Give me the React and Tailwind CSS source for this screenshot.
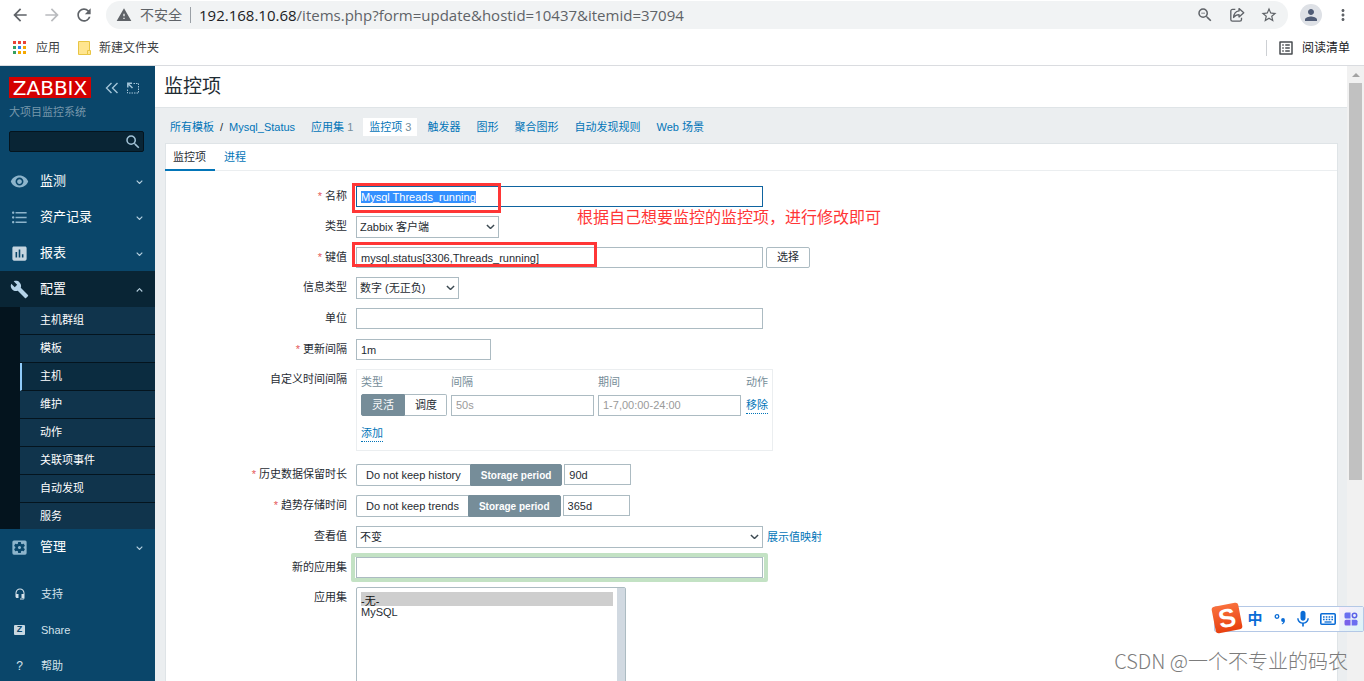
import React, { useEffect, useRef } from "react";
import {
  MdArrowBack,
  MdArrowForward,
  MdRefresh,
  MdWarning,
  MdZoomOut,
  MdStarBorder,
  MdPerson,
  MdMoreVert,
  MdListAlt,
  MdVisibility,
  MdFormatListBulleted,
  MdAssessment,
  MdBuild,
  MdSettingsApplications,
  MdHeadsetMic,
  MdSearch,
  MdMic,
} from "react-icons/md";

const mainMenu = [
  { name: "监测", icon: MdVisibility, color: "text-[#8db4cb]" },
  { name: "资产记录", icon: MdFormatListBulleted, color: "text-[#8db4cb]" },
  { name: "报表", icon: MdAssessment, color: "text-[#c5d5e0]" },
];

const configMenu = [
  "主机群组",
  "模板",
  "主机",
  "维护",
  "动作",
  "关联项事件",
  "自动发现",
  "服务",
];

const hostLinks = [
  { name: "应用集", count: 1 },
  { name: "监控项", count: 3, active: true },
  { name: "触发器" },
  { name: "图形" },
  { name: "聚合图形" },
  { name: "自动发现规则" },
  { name: "Web 场景" },
];

const appColors = [
  "bg-[#ea4335]",
  "bg-[#ea4335]",
  "bg-[#ea4335]",
  "bg-[#34a060]",
  "bg-[#2a80f0]",
  "bg-[#f5a800]",
  "bg-[#34a060]",
  "bg-[#f5a800]",
  "bg-[#f5a800]",
];

const inputClass =
  "block h-[21px] border border-[#acbbc2] bg-white px-1 text-[#1f2c33] outline-none placeholder:text-[#9a9a9a]";

const Chevron = ({ className, up }) => (
  <svg viewBox="0 0 10 6" className={className} fill="none" stroke="currentColor">
    <path d={up ? "M1 5l4-4 4 4" : "M1 1l4 4 4-4"} strokeWidth="1.6" />
  </svg>
);

// 瀏覽器工具列
const Browser = () => (
  <div className="shrink-0 border-b border-[#dadce0] bg-white text-[#5f6368]">
    <div className="flex h-[30px] items-center pr-3">
      <div className="flex items-center gap-3 px-2.5">
        <button aria-label="后退">
          <MdArrowBack className="size-5" />
        </button>
        <button aria-label="前进" className="text-[#b9bbbe]">
          <MdArrowForward className="size-5" />
        </button>
        <button aria-label="刷新">
          <MdRefresh className="size-5" />
        </button>
      </div>
      <div className="ml-0.5 flex h-7 flex-1 items-center rounded-full bg-[#f1f3f4] pr-2.5 pl-2.5">
        <MdWarning className="size-4" />
        <span className="ml-2 text-sm">不安全</span>
        <span className="mx-2 h-4 w-px bg-[#9aa0a6]" />
        <span className="flex-1 font-['Open_Sans','Noto_Sans_CJK_SC',sans-serif] text-[15px]">
          <span className="text-[#202124]">192.168.10.68</span>
          /items.php?form=update&amp;hostid=10437&amp;itemid=37094
        </span>
        <div className="flex items-center gap-3.5">
          <button aria-label="缩放">
            <MdZoomOut className="size-[18px]" />
          </button>
          <button aria-label="分享">
            <svg
              viewBox="0 0 16 16"
              className="size-[18px]"
              fill="none"
              stroke="currentColor"
              strokeWidth="1.2"
              strokeLinejoin="round"
            >
              <path d="M6.500 3H4A1.500 1.500 0 0 0 2.500 4.500V12A1.500 1.500 0 0 0 4 13.500H10.500A1.500 1.500 0 0 0 12 12V10.500" />
              <path d="M9.800 2.300l4.200 3.700-4.200 3.700V7.700C7.500 7.700 6.200 8.500 5 10.200 5.200 6.900 6.900 4.800 9.800 4.400z" />
            </svg>
          </button>
          <button aria-label="收藏">
            <MdStarBorder className="size-[18px]" />
          </button>
        </div>
      </div>
      <button
        aria-label="用户"
        className="ml-3 flex size-[22px] items-center justify-center rounded-full bg-[#dee1e6] text-[#4f5b75]"
      >
        <MdPerson className="size-[18px]" />
      </button>
      <button aria-label="菜单" className="ml-3">
        <MdMoreVert className="size-[18px]" />
      </button>
    </div>
    <div className="flex h-[35px] items-center pr-3.5 pl-[13px] text-xs text-[#3c4043]">
      <a href="#apps" className="flex items-center">
        <span className="mr-2.5 grid grid-cols-3 gap-0.5">
          {appColors.map((color, index) => (
            <span key={index} className={`size-[3px] ${color}`} />
          ))}
        </span>
        应用
      </a>
      <a href="#folder" className="ml-[18px] flex items-center">
        <svg viewBox="0 0 13 14" className="mr-2 h-3.5 w-[13px]">
          <path d="M.5.500h11v13H.500z" fill="#ffe58f" stroke="#e8c544" />
          <path d="M9.500 9.500h3v4h-3z" fill="#ffe58f" stroke="#e8c544" />
        </svg>
        新建文件夹
      </a>
      <span className="ml-auto h-4 w-px bg-[#cdd0d4]" />
      <button className="ml-2.5 flex items-center text-[#202124]">
        <MdListAlt className="mr-[7px] size-[18px] text-[#4a4d51]" />
        阅读清单
      </button>
    </div>
  </div>
);

const MenuItem = ({ name, icon: Icon, color, open }) => (
  <a
    href={`#${name}`}
    className={`flex h-9 items-center pr-3 pl-2.5 text-[13px] text-white ${
      open ? "bg-[#092535]" : ""
    }`}
  >
    <Icon className={`size-[19px] ${color}`} />
    <span className="ml-[11px] flex-1">{name}</span>
    <Chevron up={open} className="mt-0.5 w-[7px] text-[#b7d0df]" />
  </a>
);

const Sidebar = () => (
  <aside className="w-[155px] shrink-0 bg-[#0a466a]">
    <div className="flex items-center pt-[11px] pl-[9px]">
      <a
        href="#home"
        className="flex h-[21px] w-[82px] items-center justify-center bg-[#d40000] font-['DejaVu_Sans',sans-serif] text-xl text-white"
      >
        ZABBIX
      </a>
      <button aria-label="收起" className="ml-3.5 text-[#a3c4d8]">
        <svg viewBox="0 0 14 12" className="h-3 w-3.5" fill="none" stroke="currentColor" strokeWidth="1.400">
          <path d="M6.500 1l-5 5 5 5M12.500 1l-5 5 5 5" />
        </svg>
      </button>
      <button aria-label="隐藏" className="ml-2 text-[#a3c4d8]">
        <svg viewBox="0 0 12 12" className="size-3" fill="none" stroke="currentColor">
          <path d="M6.500 1.500h5v9.500H.500V7" strokeDasharray="1.500 1" />
          <path d="M.800 5.500V1.300H5M1.200 1.700L5.500 6" strokeWidth="1.500" />
        </svg>
      </button>
    </div>
    <p className="mt-1.5 pl-[9px] text-[11px] leading-4 text-[#7797ab]">
      大项目监控系统
    </p>
    <form className="relative mt-[11px] mr-[11px] ml-[9px]">
      <input
        aria-label="搜索"
        className="block h-[21px] w-full rounded-xs border border-[#04141e] bg-[#092535] px-1 text-[11px] text-white outline-none"
      />
      <MdSearch className="absolute top-0.5 right-0.5 size-[18px] text-[#a3c4d8]" />
    </form>
    <nav className="mt-[11px]">
      {mainMenu.map((item) => (
        <MenuItem key={item.name} {...item} />
      ))}
      <MenuItem name="配置" icon={MdBuild} color="text-[#b4d3e8]" open />
      <ul className="h-[222px] overflow-hidden bg-[#04141e] pl-5">
        {configMenu.map((name) => (
          <li
            key={name}
            className={`h-7 border-b border-[#04141e] text-[11px] leading-[27px] text-white ${
              name === "主机"
                ? "border-l-2 border-l-[#90cbf9] bg-[#0b2c40] pl-[18px]"
                : "bg-[#10344c] pl-5"
            }`}
          >
            <a href={`#${name}`}>{name}</a>
          </li>
        ))}
      </ul>
      <MenuItem name="管理" icon={MdSettingsApplications} color="text-[#8db4cb]" />
    </nav>
    <ul className="mt-[11px] text-[11px] text-[#d5e2ea]">
      <li className="flex h-9 items-center pl-3.5">
        <MdHeadsetMic className="mr-[15px] size-3" />
        <a href="#support">支持</a>
      </li>
      <li className="flex h-9 items-center pl-3.5">
        <span className="mr-4 flex h-2.5 w-[11px] items-center justify-center rounded-[1px] bg-[#c8d8e2] text-[9px] font-bold text-[#0a466a]">
          Z
        </span>
        <a href="#share">Share</a>
      </li>
      <li className="flex h-9 items-center pl-3.5">
        <span className="mr-4 w-[11px] text-center text-xs">?</span>
        <a href="#help">帮助</a>
      </li>
    </ul>
  </aside>
);

const Row = ({ label, htmlFor, required, className = "", children }) => (
  <div className={`mb-[9px] flex gap-[9px] ${className}`}>
    <label htmlFor={htmlFor} className="w-[181px] shrink-0 text-right leading-[21px]">
      {required && <span className="text-[#e45959]">* </span>}
      {label}
    </label>
    <div className="relative flex items-start">{children}</div>
  </div>
);

const Select = ({ id, width, value }) => (
  <div className={`relative ${width}`}>
    <select
      id={id}
      className="block h-[22px] w-full appearance-none border border-[#acbbc2] bg-white px-[3px] outline-none"
    >
      <option>{value}</option>
    </select>
    <Chevron className="pointer-events-none absolute top-2 right-1 w-[9px] text-[#3c4a52]" />
  </div>
);

// 分段按鈕，active 是選中的那個
const Segmented = ({ options, active }) => (
  <div className="flex h-[22px]">
    {options.map((option) => (
      <button
        key={option}
        type="button"
        className={`border first:rounded-l-xs last:rounded-r-xs ${
          option === active
            ? "border-[#768d99] bg-[#768d99] px-2.5 text-[10px] font-bold text-white"
            : "border-[#acbbc2] bg-white px-[9px] first:border-r-0 last:border-l-0"
        }`}
      >
        {option}
      </button>
    ))}
  </div>
);

const ItemForm = () => {
  const nameRef = useRef(null);

  useEffect(() => {
    nameRef.current.focus({ preventScroll: true });
    nameRef.current.select();
  }, []);

  return (
    <form className="pt-[15px]">
      <Row label="名称" htmlFor="name" required>
        <input
          id="name"
          ref={nameRef}
          defaultValue="Mysql Threads_running"
          className="block h-[21px] w-[407px] border border-[#0f64a0] px-1 outline-none selection:bg-[#3390ff] selection:text-white"
        />
        <div className="pointer-events-none absolute -top-[3px] -left-1 h-[30px] w-[149px] border-3 border-[#ff3636]" />
        <p className="absolute top-5 left-[221px] text-base whitespace-nowrap text-[#ff3636]">
          根据自己想要监控的监控项，进行修改即可
        </p>
      </Row>
      <Row label="类型" htmlFor="type">
        <Select id="type" width="w-[143px]" value="Zabbix 客户端" />
      </Row>
      <Row label="键值" htmlFor="key" required>
        <input
          id="key"
          defaultValue="mysql.status[3306,Threads_running]"
          className={`${inputClass} w-[407px]`}
        />
        <button
          type="button"
          className="ml-[3px] h-[21px] rounded-xs border border-[#acbbc2] px-2.5"
        >
          选择
        </button>
        <div className="pointer-events-none absolute -top-[5px] -left-1 h-[25px] w-[245px] border-3 border-[#ff3636]" />
      </Row>
      <Row label="信息类型" htmlFor="value-type">
        <Select id="value-type" width="w-[103px]" value="数字 (无正负)" />
      </Row>
      <Row label="单位" htmlFor="units">
        <input id="units" className={`${inputClass} w-[407px]`} />
      </Row>
      <Row label="更新间隔" htmlFor="delay" required className="pt-px">
        <input id="delay" defaultValue="1m" className={`${inputClass} w-[135px]`} />
      </Row>
      <Row label="自定义时间间隔" className="pb-1">
        <div className="h-[82px] border border-[#ebeef0] px-1">
          <table className="text-left">
            <thead>
              <tr className="h-6 text-[#768d99]">
                <th className="pr-1 font-normal">类型</th>
                <th className="pr-1 font-normal">间隔</th>
                <th className="pr-[5px] font-normal">期间</th>
                <th className="font-normal">动作</th>
              </tr>
            </thead>
            <tbody>
              <tr>
                <td className="pr-1">
                  <div className="flex h-[22px]">
                    <button
                      type="button"
                      className="rounded-l-xs border border-[#768d99] bg-[#768d99] px-2.5 text-white"
                    >
                      灵活
                    </button>
                    <button
                      type="button"
                      className="rounded-r-xs border border-l-0 border-[#acbbc2] pr-[9px] pl-2.5"
                    >
                      调度
                    </button>
                  </div>
                </td>
                <td className="pr-1">
                  <input
                    aria-label="间隔"
                    placeholder="50s"
                    className={`${inputClass} w-[143px]`}
                  />
                </td>
                <td className="pr-[5px]">
                  <input
                    aria-label="期间"
                    placeholder="1-7,00:00-24:00"
                    className={`${inputClass} w-[143px]`}
                  />
                </td>
                <td>
                  <button
                    type="button"
                    className="border-b border-dotted border-[#0275b8] leading-[15px] text-[#0275b8]"
                  >
                    移除
                  </button>
                </td>
              </tr>
            </tbody>
          </table>
          <button
            type="button"
            className="mt-2.5 border-b border-dotted border-[#0275b8] leading-[15px] text-[#0275b8]"
          >
            添加
          </button>
        </div>
      </Row>
      <Row label="历史数据保留时长" htmlFor="history" required>
        <Segmented options={["Do not keep history", "Storage period"]} active="Storage period" />
        <input id="history" defaultValue="90d" className={`${inputClass} ml-0.5 w-[67px]`} />
      </Row>
      <Row label="趋势存储时间" htmlFor="trends" required>
        <Segmented options={["Do not keep trends", "Storage period"]} active="Storage period" />
        <input id="trends" defaultValue="365d" className={`${inputClass} ml-0.5 w-[67px]`} />
      </Row>
      <Row label="查看值" htmlFor="valuemap">
        <Select id="valuemap" width="w-[407px]" value="不变" />
        <a href="#valuemap" className="ml-1 leading-[22px] text-[#0275b8]">
          展示值映射
        </a>
      </Row>
      <Row label="新的应用集" htmlFor="new-app">
        <div className="-mx-[5px] -my-1 rounded-xs border-4 border-[#c3e2c4] px-px">
          <input id="new-app" className={`${inputClass} w-[407px]`} />
        </div>
      </Row>
      <Row label="应用集" htmlFor="apps">
        <div className="flex h-[140px] w-[270px] rounded-xs border border-[#acbbc2]">
          <select
            id="apps"
            multiple
            defaultValue={["0"]}
            className="flex-1 overflow-hidden p-1 outline-none"
          >
            <option value="0" className="h-3.5 p-0 leading-3">
              -无-
            </option>
            <option value="1" className="h-3.5 p-0 leading-3">
              MySQL
            </option>
          </select>
          <div className="w-2 bg-[#d1d9e1]" />
        </div>
      </Row>
    </form>
  );
};

const Main = () => (
  <main className="min-w-0 flex-1 overflow-hidden bg-[#ebeef0]">
    <header className="flex h-[42px] items-center border-b border-[#dfe4e7] bg-white pl-[9px]">
      <h1 className="pt-0.5 text-[19px]">监控项</h1>
    </header>
    <nav className="flex h-[35px] items-center gap-1 pt-[3px] pl-[9px] text-[#0275b8]">
      <div className="flex gap-1.5 px-1.5 leading-[18px]">
        <a href="#templates">所有模板</a>
        <span className="text-[#1f2c33]">/</span>
        <a href="#status">Mysql_Status</a>
      </div>
      {hostLinks.map((link) => (
        <a
          key={link.name}
          href={`#${link.name}`}
          className={`px-1.5 leading-[18px] ${link.active ? "bg-white" : ""}`}
        >
          {link.name}
          {link.count && <span className="text-[#768d99]"> {link.count}</span>}
        </a>
      ))}
    </nav>
    <section className="mr-[9px] ml-2.5 border border-[#dfe4e7] bg-white">
      <div className="flex h-[27px] border-b border-[#ebeef0] leading-[27px]">
        <a href="#item" className="-ml-px h-[27px] border-b-2 border-[#0275b8] pr-[9px] pl-2">
          监控项
        </a>
        <a href="#process" className="px-[9px] text-[#0275b8]">
          进程
        </a>
      </div>
      <ItemForm />
    </section>
  </main>
);

const Scrollbar = () => (
  <div className="flex w-[17px] shrink-0 flex-col items-center bg-[#f1f1f1]">
    <div className="flex h-[17px] items-center">
      <svg viewBox="0 0 8 4" className="h-1 w-2 fill-[#a3a3a3]">
        <path d="M4 0l4 4H0z" />
      </svg>
    </div>
    <div className="h-[64.5%] w-[13px] bg-[#c1c1c1]" />
  </div>
);

// 右下角輸入法
const InputMethod = () => (
  <div className="absolute right-0 bottom-[49px] flex h-[26px] w-[150px] items-center rounded-xs border border-[#b4c8e6] bg-white pl-8 text-[#0a6cd6]">
    <svg viewBox="0 0 34 34" className="absolute -top-1.5 -left-[5px] size-[34px] overflow-visible">
      <defs>
        <linearGradient id="ime" x1="0" y1="0" x2="0" y2="1">
          <stop offset="0" stopColor="#f9703c" />
          <stop offset="1" stopColor="#e8400f" />
        </linearGradient>
      </defs>
      <g transform="rotate(-11 17 17)">
        <rect x="3.500" y="3.500" width="27" height="27" rx="3" fill="url(#ime)" />
        <text
          x="17"
          y="26"
          textAnchor="middle"
          fontFamily="Liberation Sans, sans-serif"
          fontWeight="bold"
          fontSize="26"
          fill="#fff"
        >
          S
        </text>
      </g>
    </svg>
    <span className="w-4 text-center text-[15px] leading-6 font-bold">中</span>
    <svg viewBox="0 0 12 12" className="ml-[11px] size-3" fill="currentColor">
      <circle cx="3" cy="3.500" r="1.800" fill="none" stroke="currentColor" strokeWidth="1.300" />
      <circle cx="9" cy="7" r="1.900" />
      <path d="M10.900 7c0 2.500-1 3.800-2.900 4.500l-.300-.800c1-.500 1.500-1.200 1.500-2.200z" />
    </svg>
    <MdMic className="ml-[7px] size-5" />
    <svg viewBox="0 0 16 14" className="ml-[7px] h-3.5 w-4">
      <rect x=".800" y="1.800" width="14.400" height="10.400" rx="1" fill="none" stroke="currentColor" strokeWidth="1.600" />
      <path d="M3 5h10M3 7.500h10" stroke="currentColor" strokeWidth="1.500" strokeDasharray="1.600 1.200" />
      <path d="M4.500 10h7" stroke="currentColor" strokeWidth="1.300" />
    </svg>
    <div className="ml-auto flex h-full w-6 items-center justify-center bg-linear-to-br from-[#fbeefb] to-[#d9f4f8]">
      <svg viewBox="0 0 14 14" className="size-3.5">
        <path d="M2 .500h4.500v6H2A1.500 1.500 0 0 1 .500 5V2A1.500 1.500 0 0 1 2 .500z" fill="#6a6ff0" />
        <path d="M2 7.700h4.500v5.800H2A1.500 1.500 0 0 1 .500 12V9.200A1.500 1.500 0 0 1 2 7.700z" fill="#7a62ea" />
        <path d="M7.700 7.700H12a1.500 1.500 0 0 1 1.500 1.500V12a1.500 1.500 0 0 1-1.500 1.500H7.700z" fill="#6a6ff0" />
        <circle cx="10.500" cy="3.500" r="2.200" fill="none" stroke="#5a62e8" strokeWidth="1.500" />
      </svg>
    </div>
  </div>
);

const App = () => {
  return (
    <div className="relative flex h-screen flex-col overflow-hidden font-['Liberation_Sans','Noto_Sans_CJK_SC',sans-serif] text-[11px] text-[#1f2c33]">
      <Browser />
      <div className="flex min-h-0 flex-1">
        <Sidebar />
        <Main />
        <Scrollbar />
      </div>
      <InputMethod />
      <div className="absolute right-4 bottom-1.5 font-['Noto_Sans_CJK_SC',sans-serif] text-xl font-light text-[#7c7c7c]">
        CSDN @一个不专业的码农
      </div>
    </div>
  );
};

export default App;
